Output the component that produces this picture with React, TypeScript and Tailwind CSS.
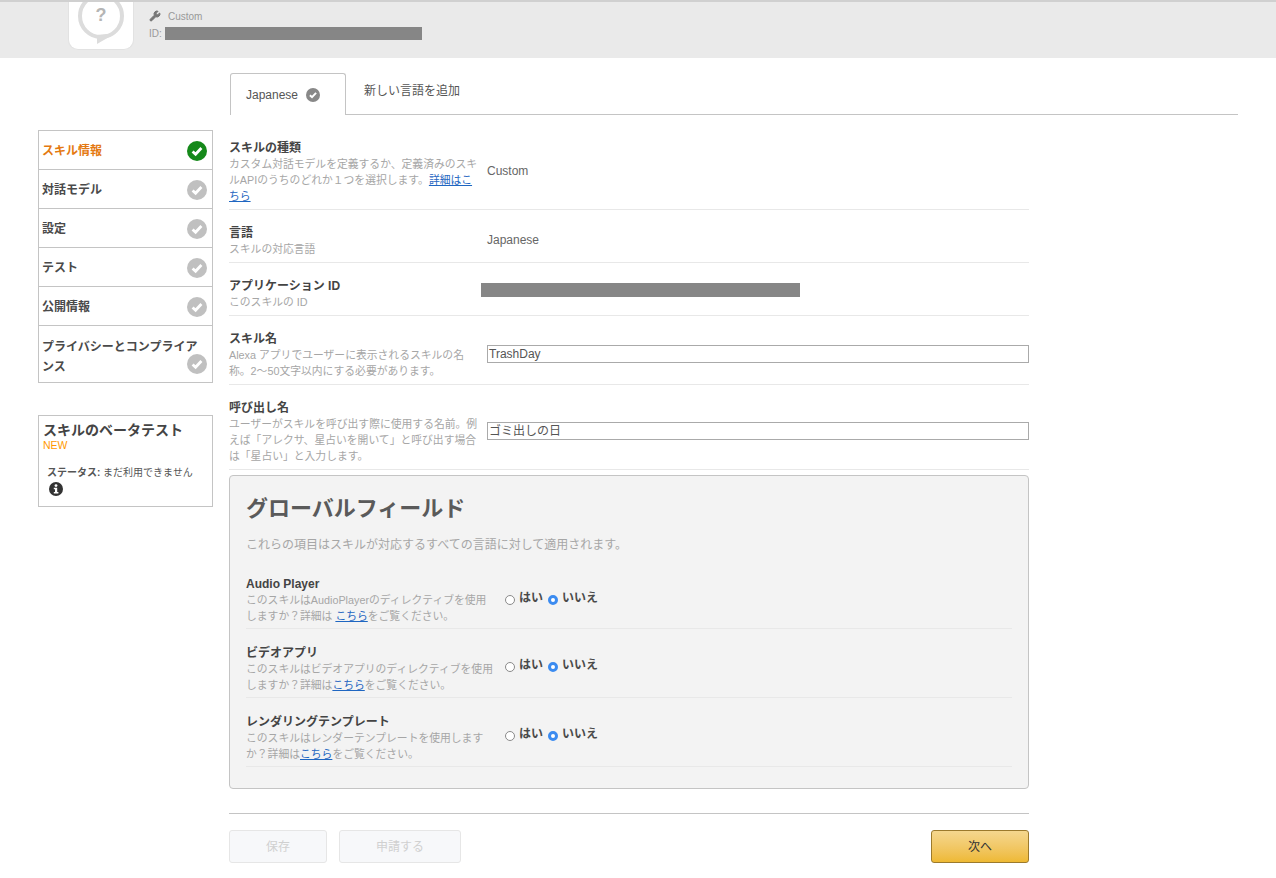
import { Wrench } from "lucide-react";

function CheckCircle({ color, size = 20, check = "white" }: { color: string; size?: number; check?: string }) {
  return (
    <svg width={size} height={size} viewBox="0 0 20 20" className="shrink-0">
      <circle cx="10" cy="10" r="10" fill={color} />
      <path d="M5.6 10.4L8.6 13.2L14.4 7" fill="none" stroke={check} strokeWidth="2.8" />
    </svg>
  );
}

function Radio({ checked }: { checked?: boolean }) {
  if (checked) {
    return <span className="w-[10px] h-[10px] mt-[3px] rounded-full border-[3px] border-[#3b8bf0] bg-white shrink-0" />;
  }
  return <span className="w-[10px] h-[10px] mt-[3px] rounded-full border border-[#8a8a8a] bg-white shrink-0" />;
}

function Link({ children }: { children: string }) {
  return <a className="text-[#1f66c1] underline">{children}</a>;
}

const steps = ["対話モデル", "設定", "テスト", "公開情報"];

function Sidebar() {
  return (
    <div className="w-[175px] shrink-0 mt-[15px]">
      <div className="border border-[#c4c4c4] flex flex-col">
        <div className="h-[39px] flex items-center justify-between pl-[3px] pr-[5px] pt-[2px] border-b border-[#c4c4c4]">
          <span className="text-[12px] font-bold text-[#e47911]">スキル情報</span>
          <CheckCircle color="#15891a" />
        </div>
        {steps.map((s) => (
          <div key={s} className="h-[39px] flex items-center justify-between pl-[3px] pr-[5px] pt-[2px] border-b border-[#c4c4c4]">
            <span className="text-[12px] font-bold text-[#4a4a4a]">{s}</span>
            <CheckCircle color="#c0c0c0" />
          </div>
        ))}
        <div className="h-[56px] relative pl-[3px] pr-[5px] pt-[11px] text-[12px] leading-[20px] font-bold text-[#4a4a4a]">
          プライバシーとコンプライアンス
          <span className="absolute right-[5px] top-[28px]">
            <CheckCircle color="#c0c0c0" />
          </span>
        </div>
      </div>
      <div className="border border-[#c4c4c4] mt-[32px] h-[92px] px-[4px] pt-[5px]">
        <div className="text-[14px] leading-[18px] font-bold text-[#444]">スキルのベータテスト</div>
        <div className="text-[10.5px] leading-[12px] text-[#f90]">NEW</div>
        <div className="pl-[4px] mt-[15px] text-[10px] leading-[14px] text-[#555]">
          <b>ステータス:</b> まだ利用できません
        </div>
        <svg width="14" height="14" viewBox="0 0 14 14" className="ml-[6px] mt-[2px]">
          <circle cx="7" cy="7" r="7" fill="#333" />
          <circle cx="7" cy="3.6" r="1.4" fill="#fff" />
          <path d="M4.8 5.8H8.2V10H9.4V11.4H4.8V10H6V7.2H4.8Z" fill="#fff" />
        </svg>
      </div>
    </div>
  );
}

function Row({
  title,
  desc,
  className,
  children,
}: {
  title: string;
  desc: React.ReactNode;
  className: string;
  children: React.ReactNode;
}) {
  return (
    <div className={`flex items-center border-b border-[#e8e8e8] ${className}`}>
      <div className="w-[258px] shrink-0 self-start pr-[8px]">
        <div className="text-[12px] leading-[16px] font-bold text-[#444]">{title}</div>
        <div className="text-[10.8px] leading-[16px] text-[#a6a6a6]">{desc}</div>
      </div>
      <div className="flex-1 min-w-0">{children}</div>
    </div>
  );
}

function RadioRow({
  title,
  desc,
  className,
  radioClass,
}: {
  title: string;
  desc: React.ReactNode;
  className: string;
  radioClass: string;
}) {
  return (
    <div className={`flex border-b border-[#e8e8e8] ${className}`}>
      <div className="w-[259px] shrink-0 pr-[9px]">
        <div className="text-[12px] leading-[16px] font-bold text-[#444]">{title}</div>
        <div className="text-[10.8px] leading-[16px] text-[#a6a6a6]">{desc}</div>
      </div>
      <div className={`flex items-center gap-[4px] h-[30px] text-[12px] font-bold text-[#4a4a4a] ${radioClass}`}>
        <Radio />
        <span className="mr-[1px]">はい</span>
        <Radio checked />
        <span>いいえ</span>
      </div>
    </div>
  );
}

function Panel() {
  return (
    <div className="mt-[5px] h-[314px] border border-[#c4c4c4] rounded-[4px] bg-[#f3f3f3] px-[16px] pt-[17px]">
      <div className="text-[22px] leading-[32px] font-bold text-[#5a5a5a]">グローバルフィールド</div>
      <div className="mt-[12px] text-[12px] leading-[16px] text-[#a6a6a6]">
        これらの項目はスキルが対応するすべての言語に対して適用されます。
      </div>
      <div className="mt-[23px] flex flex-col">
        <RadioRow
          title="Audio Player"
          className="h-[53px]"
          radioClass="mt-[7px]"
          desc={<>このスキルはAudioPlayerのディレクティブを使用しますか？詳細は <Link>こちら</Link>をご覧ください。</>}
        />
        <RadioRow
          title="ビデオアプリ"
          className="h-[69px] pt-[16px]"
          radioClass="mt-[5px]"
          desc={<>このスキルはビデオアプリのディレクティブを使用しますか？詳細は<Link>こちら</Link>をご覧ください。</>}
        />
        <RadioRow
          title="レンダリングテンプレート"
          className="h-[69px] pt-[16px]"
          radioClass="mt-[5px]"
          desc={<>このスキルはレンダーテンプレートを使用しますか？詳細は<Link>こちら</Link>をご覧ください。</>}
        />
      </div>
    </div>
  );
}

export default function App() {
  return (
    <div className="w-[1276px] h-[878px] overflow-hidden bg-white font-['Liberation_Sans','Noto_Sans_CJK_JP',sans-serif]">
      {/* Skill header */}
      <div className="h-[58px] bg-[#eaeaea] border-t-2 border-[#d0d0d0] overflow-hidden flex pl-[68px]">
        <div className="w-[66px] h-[48px] bg-white rounded-b-[10px] border border-t-0 border-[#e2e2e2] shrink-0 relative overflow-hidden">
          <svg width="50" height="46" viewBox="0 0 50 46" className="absolute left-[8px] top-0">
            <circle cx="24" cy="14" r="21" fill="none" stroke="#dcdcdc" strokeWidth="4" />
            <path d="M20 33V42L39 31Z" fill="#dcdcdc" />
          </svg>
          <span className="absolute left-0 right-0 top-[2px] text-center text-[18px] leading-[22px] font-bold text-[#b5b5b5]">?</span>
        </div>
        <div className="ml-[15px] pt-[7px] text-[10px] text-[#999]">
          <div className="flex items-center h-[14px]">
            <Wrench size={12} className="text-[#777] fill-[#777]" />
            <span className="ml-[7px]">Custom</span>
          </div>
          <div className="flex items-center mt-[4px] h-[13px]">
            <span>ID:</span>
            <div className="ml-[3px] w-[257px] h-[13px] bg-[#868686]" />
          </div>
        </div>
      </div>

      {/* Language tabs */}
      <div className="ml-[230px] w-[1008px] mt-[15px] h-[42px] flex border-b border-[#c4c4c4]">
        <div className="w-[116px] h-[42px] bg-white border border-b-0 border-[#c4c4c4] rounded-t-[3px] flex items-center pl-[15px] text-[12px] text-[#555]">
          Japanese
          <span className="ml-[8px]">
            <CheckCircle color="#888" size={14} />
          </span>
        </div>
        <div className="ml-[18px] pt-[10px] text-[12px] leading-[17px] text-[#555]">新しい言語を追加</div>
      </div>

      <div className="flex pl-[38px]">
        <Sidebar />

        <div className="w-[800px] ml-[16px] mt-[16px]">
          <Row title="スキルの種類" className="h-[79px] pt-[9px]" desc={<>カスタム対話モデルを定義するか、定義済みのスキルAPIのうちのどれか１つを選択します。<Link>詳細はこちら</Link></>}>
            <div className="text-[12px] text-[#666] -mt-[8px]">Custom</div>
          </Row>
          <Row title="言語" className="h-[53px] pt-[15px]" desc="スキルの対応言語">
            <div className="text-[12px] text-[#666] -mt-[8px]">Japanese</div>
          </Row>
          <Row title="アプリケーション ID" className="h-[53px] pt-[15px]" desc="このスキルの ID">
            <div className="-ml-[6px] w-[319px] h-[14px] bg-[#868686] -mt-[14px]" />
          </Row>
          <Row title="スキル名" className="h-[69px] pt-[15px]" desc="Alexa アプリでユーザーに表示されるスキルの名称。2〜50文字以内にする必要があります。">
            <div className="h-[18px] border border-[#aaa] pl-[1px] text-[12px] leading-[16px] text-[#555] -mt-[7px]">TrashDay</div>
          </Row>
          <Row title="呼び出し名" className="h-[85px] pt-[15px]" desc="ユーザーがスキルを呼び出す際に使用する名前。例えば「アレクサ、星占いを開いて」と呼び出す場合は「星占い」と入力します。">
            <div className="h-[18px] border border-[#aaa] pl-[1px] text-[12px] leading-[16px] text-[#555] -mt-[8px]">ゴミ出しの日</div>
          </Row>

          <Panel />

          <div className="mt-[24px] pt-[16px] border-t border-[#c4c4c4] flex items-center">
            <button className="w-[98px] h-[33px] border border-[#e6e6e6] rounded-[3px] bg-[#f7f8fa] text-[12px] text-[#d0d0d0]">保存</button>
            <button className="w-[122px] h-[33px] ml-[12px] border border-[#e6e6e6] rounded-[3px] bg-[#f7f8fa] text-[12px] text-[#d0d0d0]">申請する</button>
            <button className="w-[98px] h-[33px] ml-auto border border-[#9c7a2c] rounded-[3px] bg-linear-to-b from-[#f5d78e] to-[#eeb933] text-[12px] text-[#333]">次へ</button>
          </div>
        </div>
      </div>
    </div>
  );
}
